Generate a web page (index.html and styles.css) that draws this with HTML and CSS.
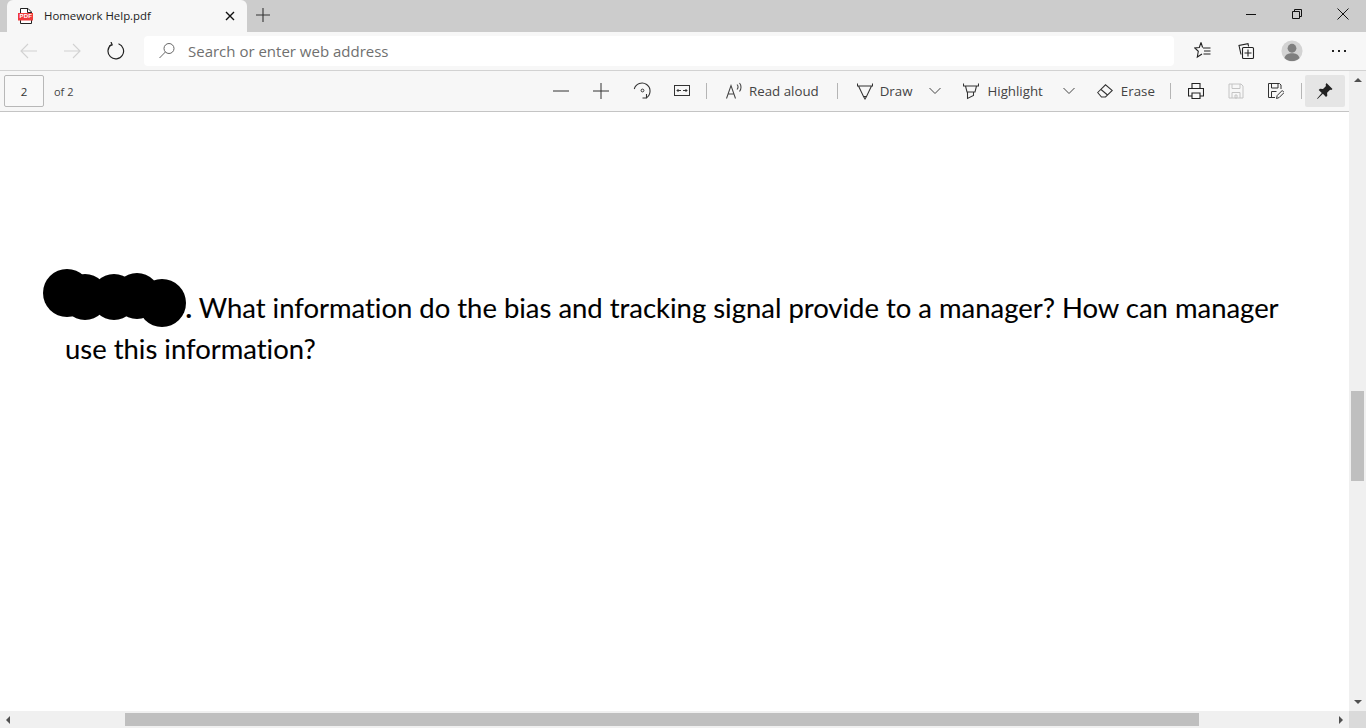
FILE: index.html
```html
<!DOCTYPE html>
<html lang="en">
<head>
<meta charset="utf-8">
<title>Homework Help.pdf</title>
<link rel="stylesheet" href="styles.css">
</head>
<body>
<div class="tabstrip">
  <div class="tab">
    <svg class="ico tab-pdf" width="18" height="18" viewBox="0 0 18 18"><path d="M3.500 1.500h7.500l3.500 3.500v11.500h-11z" fill="#fff" stroke="#222" stroke-width="1"/><path d="M10.500 1.500v4h4" fill="none" stroke="#222"/><rect x="1" y="6" width="15" height="7.500" fill="#f03a3a"/></svg>
    <span class="tab-pdf-label">PDF</span>
    <span class="tab-title">Homework Help.pdf</span>
    <svg class="ico tab-close" width="10" height="10" viewBox="0 0 10 10"><path d="M1 1l8 8M9 1l-8 8" stroke="#111" stroke-width="1.400" fill="none"/></svg>
  </div>
  <button class="newtab"><svg width="14" height="14" viewBox="0 0 14 14"><path d="M7 0v14M0 7h14" stroke="#333" stroke-width="1.100" fill="none"/></svg></button>
  <div class="winctl">
    <svg width="12" height="12" viewBox="0 0 12 12"><path d="M1 6.500h10" stroke="#111" fill="none"/></svg>
    <svg width="12" height="12" viewBox="0 0 12 12"><path d="M1.500 3.500h7v7h-7zM3.500 3.500v-2h7v7h-2" stroke="#111" fill="none"/></svg>
    <svg width="12" height="12" viewBox="0 0 12 12"><path d="M.5.5l11 11M11.500.5l-11 11" stroke="#111" fill="none"/></svg>
  </div>
</div>

<div class="navbar">
  <svg class="nav-back" width="18" height="16" viewBox="0 0 18 16"><path d="M17 8H1M8 1L1 8l7 7" stroke="#d2d2d2" stroke-width="1.100" fill="none"/></svg>
  <svg class="nav-fwd" width="18" height="16" viewBox="0 0 18 16"><path d="M1 8h16M10 1l7 7-7 7" stroke="#d2d2d2" stroke-width="1.100" fill="none"/></svg>
  <svg class="nav-reload" width="18" height="18" viewBox="0 0 18 18"><path d="M11.500 1.800A7.800 7.800 0 1 1 4.500 2.600" stroke="#222" stroke-width="1.200" fill="none"/><path d="M4 0l1.200 3-3 1" stroke="#222" stroke-width="1.200" fill="none"/></svg>
  <div class="omnibox">
    <svg width="18" height="18" viewBox="0 0 18 18"><circle cx="11" cy="6.500" r="5" stroke="#666" fill="none"/><path d="M7.400 10L1.500 16" stroke="#666" fill="none"/></svg>
    <span>Search or enter web address</span>
  </div>
  <div class="nav-actions">
    <svg width="18" height="18" viewBox="0 0 18 18"><path d="M7 .5l1.600 5M7 .5L5.300 5.500l-4.600.5 3.600 3.300-1 5.700L8 12M9 6h7.500M10 9h6.500M9.500 12h7" stroke="#222" stroke-width="1.100" fill="none"/></svg>
    <svg width="18" height="18" viewBox="0 0 18 18"><path d="M4 12.500L2 3.500l9-1.800.6 2.800" stroke="#222" stroke-width="1.100" fill="none"/><rect x="5.500" y="5.500" width="11" height="11" rx="1" stroke="#222" stroke-width="1.100" fill="#f7f7f7"/><path d="M11 7.500v7M7.500 11h7" stroke="#222" stroke-width="1.100"/></svg>
    <svg class="avatar" width="22" height="22" viewBox="0 0 24 24"><circle cx="12" cy="12" r="11.500" fill="#d3d3d3"/><circle cx="12" cy="9" r="4.800" fill="#7f7f7f"/><path d="M3.800 19.500c1-3.800 4.500-5 8.200-5s7.200 1.200 8.200 5a11.500 11.500 0 0 1-16.400 0z" fill="#7f7f7f"/></svg>
    <svg width="16" height="4" viewBox="0 0 16 4"><path d="M1 1h2v2H1zM7 1h2v2H7zM13 1h2v2h-2z" fill="#222"/></svg>
  </div>
</div>

<div class="pdfbar">
  <div class="pagebox">2</div>
  <span class="of">of 2</span>
  <div class="pdftools">
    <svg class="t-minus" width="16" height="16" viewBox="0 0 16 16"><path d="M0 8h16" stroke="#333" fill="none"/></svg>
    <svg class="t-plus" width="16" height="16" viewBox="0 0 16 16"><path d="M0 8h16M8 0v16" stroke="#333" fill="none"/></svg>
    <svg class="t-rotate" width="18" height="18" viewBox="0 0 18 18"><path d="M1.300 7A8 8 0 1 1 13.500 15.700" stroke="#333" stroke-width="1.100" fill="none"/><circle cx="9.500" cy="8.500" r="1.400" stroke="#333" fill="none"/><path d="M13.500 12v4H9.500" stroke="#333" stroke-width="1.100" fill="none"/></svg>
    <svg class="t-fit" width="16" height="12" viewBox="0 0 16 12"><rect x=".5" y=".5" width="15" height="10" stroke="#333" fill="none"/><path d="M3 5.500h4M9 5.500h4M4.500 4L3 5.500 4.500 7M11.500 4L13 5.500 11.500 7" stroke="#333" fill="none"/></svg>
    <i class="sep s1"></i>
    <svg class="t-read" width="18" height="18" viewBox="0 0 18 18"><path d="M1.500 16.500L6 3.500l4.500 13M2.900 12h6.200" stroke="#444" stroke-width="1.050" fill="none"/><path d="M12 2.500c1.200 1.300 1.200 3.500 0 5M14.500 1c2 2.300 2 6 0 8.500" stroke="#444" stroke-width="1.050" fill="none"/></svg>
    <span class="lbl l-read">Read aloud</span>
    <i class="sep s2"></i>
    <svg class="t-draw" width="16" height="18" viewBox="0 0 16 18"><path d="M.5 1.500v2.500h15V1.500M1.500 4l5 10.500h3l5-10.500M6.500 14.500L8 17l1.500-2.500" stroke="#333" stroke-width="1.050" fill="none"/></svg>
    <span class="lbl l-draw">Draw</span>
    <svg class="t-chev1" width="12" height="8" viewBox="0 0 12 8"><path d="M.5 1l5.500 5.500L11.500 1" stroke="#444" fill="none"/></svg>
    <svg class="t-hl" width="16" height="18" viewBox="0 0 16 18"><path d="M.5 1.500v2.500h15V1.500M2.500 4l1.500 6h8l1.500-6M4.500 10v6.500l6-3v-3.500" stroke="#333" stroke-width="1.050" fill="none"/></svg>
    <span class="lbl l-hl">Highlight</span>
    <svg class="t-chev2" width="12" height="8" viewBox="0 0 12 8"><path d="M.5 1l5.500 5.500L11.500 1" stroke="#444" fill="none"/></svg>
    <svg class="t-erase" width="16" height="14" viewBox="0 0 16 14"><path d="M.7 8.500L8.500.8l6.800 5.700-6.800 6.500H4.500zM4 5.500l6.500 5.500" stroke="#333" stroke-width="1.050" fill="none"/></svg>
    <span class="lbl l-erase">Erase</span>
    <i class="sep s3"></i>
    <svg class="t-print" width="16" height="16" viewBox="0 0 16 16"><path d="M4 5V.5h8V5M4 13H.5V5.500h15V13H12M4 10h8v5.500H4z" stroke="#222" stroke-width="1.100" fill="none"/></svg>
    <svg class="t-save" width="16" height="16" viewBox="0 0 16 16"><path d="M1 1h12l2 2v12H1zM4 1v4.500h8V1M4 15V9.500h8V15M7 12h2v3H7z" stroke="#c4c4c4" fill="none"/></svg>
    <svg class="t-saveas" width="16" height="16" viewBox="0 0 16 16"><path d="M7 14.500H.5V.5h11l1.500 1.500v4M3.500.5v4.500h6.500V.5M3.500 14.500V8.500h5" stroke="#333" fill="none"/><path d="M8.500 15.500l.7-3 5-5 2 2-5 5z" stroke="#333" fill="none"/></svg>
    <i class="sep s4"></i>
    <button class="pin"><svg width="18" height="18" viewBox="0 0 18 18"><path d="M10.500 1l6 6-1.200 1-1.200-.3-3 3 .2 3-1.300 1.200-3.100-3.100L1.500 17l-.4-.4L5.800 11 2.700 7.900 4 6.700l3 .2 3-3-.4-1.200z" fill="#222"/></svg></button>
  </div>
</div>

<div class="viewer">
  <div class="page">
    <div class="redaction"><i class="b1"></i><i class="b2"></i><i class="b3"></i><i class="b4"></i><i class="b5"></i></div>
    <p class="q"><span class="q-dot">.</span> What information do the bias and tracking signal provide to a manager? How can manager<br>use this information?</p>
  </div>
  <div class="vscroll">
    <span class="arrow up"></span>
    <div class="vtrack"><div class="vthumb"></div></div>
    <span class="arrow down"></span>
  </div>
  <div class="hscroll">
    <span class="arrow left"></span>
    <div class="htrack"><div class="hthumb"></div></div>
    <span class="arrow right"></span>
  </div>
  <div class="corner"></div>
</div>
</body>
</html>
```
FILE: styles.css
```css
* { box-sizing: border-box; }
html, body { margin: 0; height: 100%; overflow: hidden; background: #fff; }
body { width: 1366px; height: 728px; display: flex; flex-direction: column; font-family: "Open Sans", "Noto Sans", sans-serif; color: #333; }
svg { display: block; flex: none; }
button { border: 0; padding: 0; background: none; }

.tabstrip { height: 32px; flex: none; background: #cccccc; display: flex; align-items: flex-end; padding-left: 7px; }
.tab { position: relative; width: 240px; height: 32px; background: #f7f7f7; border-radius: 6px 6px 0 0; display: flex; align-items: center; padding-left: 10px; }
.tab-pdf { margin-right: 9px; }
.tab-pdf-label { position: absolute; left: 12.5px; top: 12.5px; font: 700 6px "Liberation Sans", sans-serif; color: #fff; letter-spacing: .2px; }
.tab-title { font-size: 11.4px; color: #222; width: 181px; white-space: nowrap; position: relative; top: -.5px; }
.newtab { width: 32px; height: 30px; margin-bottom: 2px; display: flex; align-items: center; justify-content: center; }
.winctl { margin-left: auto; height: 32px; display: flex; align-items: center; gap: 34px; padding-right: 17px; position: relative; top: -2px; }

.navbar { height: 39px; flex: none; background: #f7f7f7; border-bottom: 1px solid #d2d2d2; display: flex; align-items: center; padding-left: 20px; }
.nav-fwd { margin-left: 25px; }
.nav-reload { margin-left: 26px; }
.omnibox { margin-left: 19px; width: 1030px; height: 30px; background: #fff; border-radius: 4px; display: flex; align-items: center; gap: 12px; padding-left: 14px; color: #70706f; font-size: 15px; }
.nav-actions { display: flex; align-items: center; padding-left: 20px; }
.nav-actions svg:nth-child(2) { margin-left: 25px; }
.nav-actions .avatar { margin-left: 26px; }
.nav-actions svg:nth-child(4) { margin-left: 28px; }

.pdfbar { height: 41px; flex: none; background: #f7f7f7; border-bottom: 1px solid #c4c4c4; display: flex; align-items: center; padding-left: 4px; }
.pagebox { width: 40px; height: 32px; border: 1px solid #b8b8b8; border-radius: 2px; background: #f9f9f9; font-size: 11.5px; display: flex; align-items: center; justify-content: center; }
.of { margin-left: 10px; font-size: 11px; color: #444; }
.pdftools { margin-left: auto; display: flex; align-items: center; height: 40px; width: 813px; }
.lbl { font-size: 13.3px; color: #444; white-space: nowrap; }
.sep { width: 1px; height: 16px; background: #b5b5b5; display: block; flex: none; }
.t-plus { margin-left: 24px; }
.t-rotate { margin-left: 24px; }
.t-fit { margin-left: 23px; }
.s1 { margin-left: 16px; }
.t-read { margin-left: 18px; }
.l-read { margin-left: 6px; }
.s2 { margin-left: 18px; }
.t-draw { margin-left: 19px; }
.l-draw { margin-left: 7px; }
.t-chev1 { margin-left: 17px; }
.t-hl { margin-left: 22px; }
.l-hl { margin-left: 8px; }
.t-chev2 { margin-left: 20px; }
.t-erase { margin-left: 22px; }
.l-erase { margin-left: 8px; }
.s3 { margin-left: 15px; }
.t-print { margin-left: 17px; }
.t-save { margin-left: 24px; }
.t-saveas { margin-left: 24px; }
.s4 { margin-left: 17px; }
.pin { margin-left: 3px; width: 40px; height: 32px; background: #e5e5e5; border-radius: 2px; display: flex; align-items: center; justify-content: center; }

.viewer { flex: 1; display: grid; grid-template-columns: 1fr 17px; grid-template-rows: 1fr 17px; min-height: 0; }
.page { position: relative; background: #fff; padding: 175px 0 0 65px; }
.q { margin: 0; font-family: Lato, "Noto Sans", sans-serif; font-size: 27.45px; line-height: 41px; color: #000; white-space: nowrap; font-variant-ligatures: none; -webkit-text-stroke: .1px #000; }
.q-dot { display: inline-block; margin-left: 120.5px; font-weight: 700; }
.redaction { position: absolute; left: 43px; top: 157px; width: 144px; height: 58px; }
.redaction i { position: absolute; display: block; background: #000; border-radius: 50%; width: 46px; height: 46px; }
.b1 { left: 0; top: 0; width: 48px !important; height: 48px !important; }
.b2 { left: 19px; top: 5px; }
.b3 { left: 48px; top: 5px; }
.b4 { left: 71px; top: 4px; }
.b5 { left: 95px; top: 10px; width: 48px !important; height: 48px !important; }

.vscroll { background: #f0f0f0; display: flex; flex-direction: column; align-items: center; position: relative; margin-top: -41px; }
.vtrack { flex: 1; width: 100%; position: relative; }
.vthumb { position: absolute; top: 309px; left: 2px; width: 13px; height: 90px; background: #bfbfbf; }
.hscroll { background: #f0f0f0; display: flex; align-items: center; padding: 0 6px; }
.htrack { flex: 1; height: 100%; position: relative; }
.hthumb { position: absolute; left: 115px; top: 2px; width: 1074px; height: 13px; background: #bfbfbf; }
.corner { background: #dadada; }
.arrow { display: block; width: 0; height: 0; flex: none; border-style: solid; border-color: transparent; }
.up { border-width: 0 4px 4px; border-bottom-color: #505050; margin: 7px 0 0; }
.down { border-width: 4px 4px 0; border-top-color: #505050; margin: 0 0 7px; }
.left { border-width: 4px 4px 4px 0; border-right-color: #505050; }
.right { border-width: 4px 0 4px 4px; border-left-color: #505050; }
```
